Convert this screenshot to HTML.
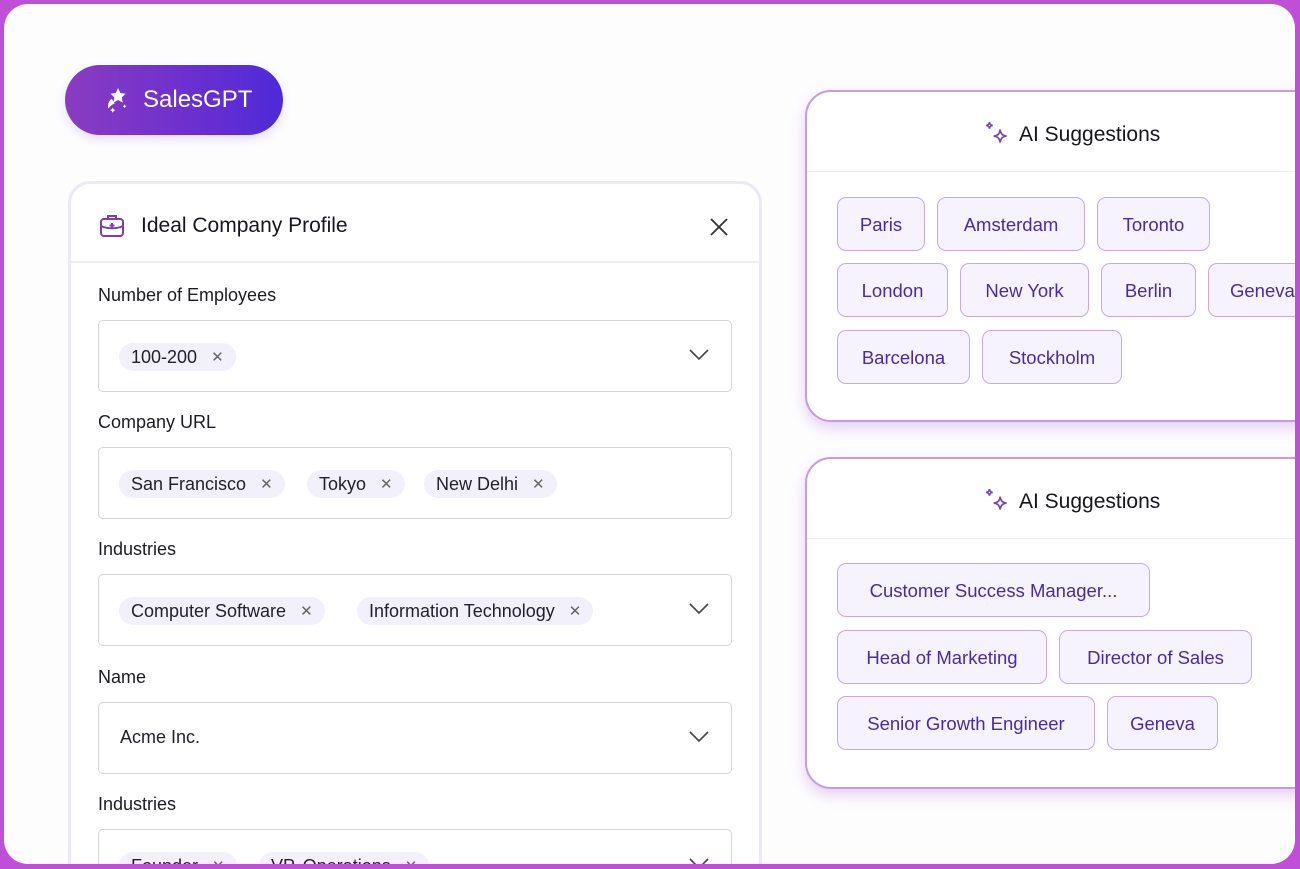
<!DOCTYPE html>
<html><head><meta charset="utf-8"><style>
*{box-sizing:border-box;margin:0;padding:0}
body{width:1300px;height:869px;background:#c04fd8;font-family:"Liberation Sans",sans-serif;overflow:hidden;position:relative}
.frame{position:absolute;left:4px;top:4px;width:1291px;height:860px;background:#fdfdfe;border-radius:24px;overflow:hidden}
.abs{position:absolute}
.brand{left:61px;top:61px;width:218px;height:70px;border-radius:35px;background:linear-gradient(90deg,#8a3cc0,#6a2fd0 60%,#4e2ad8);color:#fff;font-size:24px;display:flex;align-items:center;padding-left:38px;box-shadow:0 4px 10px rgba(90,40,200,.15)}
.card{left:64px;top:177px;width:694px;height:720px;background:#fff;border:3px solid #ebe8fb;border-radius:22px}
.hdr{position:absolute;left:0;top:0;right:0;height:79px;border-bottom:2px solid #ececf0;display:flex;align-items:center;padding-left:70px;padding-top:6px;font-size:21px;color:#16161d}
.lbl{font-size:18px;color:#1b1b22;left:94px}
.inp{left:94px;width:634px;height:72px;border:1.5px solid #d5d5da;border-radius:5px;background:#fff}
.pill{position:absolute;top:22px;height:28px;border-radius:14px;background:#f1f0fb;font-size:18px;color:#22222a;display:flex;align-items:center;padding:0 12px;white-space:nowrap}
.pill span{margin-left:14px;color:#666;font-size:15px}
.chev{position:absolute;right:22px;top:28px}
.sc{left:801px;width:520px;height:332px;background:#fff;border:2px solid #c89be0;border-radius:26px;box-shadow:0 6px 14px rgba(190,120,230,.35)}
.sh{position:absolute;left:0;right:0;top:0;height:80px;border-bottom:1.5px solid #efeff3;display:flex;align-items:center;padding-left:176px;padding-top:7px;font-size:21px;color:#16161d}
.chip{position:absolute;height:54px;border:1.5px solid #c6a9e4;background:#f6f2fe;border-radius:9px;color:#4a2aa6;font-size:18.5px;display:flex;align-items:center;justify-content:center;white-space:nowrap;overflow:hidden;padding-top:2px}
</style></head><body>
<div class="frame">
<div class="abs brand"><svg width="28" height="28" viewBox="0 0 26 26" style="margin-right:12px"><path d="M14 2l2.2 4.5 4.8.7-3.5 3.4.8 4.8L14 13l-4.3 2.4.8-4.8L7 7.2l4.8-.7z" fill="#fff"/><path d="M8 12c-3 2-4 6-3 9 2-3 4-4 6-5" fill="#fff"/><path d="M9 20l.8 1.6 1.6.8-1.6.8L9 25l-.8-1.8-1.6-.8 1.6-.8zM20 17l.6 1.2 1.2.6-1.2.6-.6 1.2-.6-1.2-1.2-.6 1.2-.6z" fill="#fff"/></svg>SalesGPT</div>

<div class="abs card">
<div class="hdr"><svg width="26" height="26" viewBox="0 0 26 26" style="position:absolute;left:28px;top:29px" fill="none" stroke="#7b3fb0" stroke-width="2"><rect x="2" y="6" width="22" height="17" rx="3"/><path d="M9 6V3h8v3M2 13c6 3 16 3 22 0M13 10v5M10.5 12.5h5"/></svg>Ideal Company Profile
<svg width="20" height="20" viewBox="0 0 20 20" style="position:absolute;right:30px;top:33px" stroke="#333" stroke-width="1.8"><path d="M2 2l16 16M18 2L2 18"/></svg></div>
</div>

<div class="abs lbl" style="top:281px">Number of Employees</div>
<div class="abs inp" style="top:316px"><div class="pill" style="left:20px">100-200<span>✕</span></div><svg class="chev" width="20" height="12" viewBox="0 0 20 12" fill="none" stroke="#444" stroke-width="1.6"><path d="M1 1l9 9 9-9"/></svg></div>

<div class="abs lbl" style="top:408px">Company URL</div>
<div class="abs inp" style="top:443px"><div class="pill" style="left:20px">San Francisco<span>✕</span></div><div class="pill" style="left:208px">Tokyo<span>✕</span></div><div class="pill" style="left:325px">New Delhi<span>✕</span></div></div>

<div class="abs lbl" style="top:535px">Industries</div>
<div class="abs inp" style="top:570px"><div class="pill" style="left:20px">Computer Software<span>✕</span></div><div class="pill" style="left:258px">Information Technology<span>✕</span></div><svg class="chev" width="20" height="12" viewBox="0 0 20 12" fill="none" stroke="#444" stroke-width="1.6"><path d="M1 1l9 9 9-9"/></svg></div>

<div class="abs lbl" style="top:663px">Name</div>
<div class="abs inp" style="top:698px"><div style="position:absolute;left:21px;top:24px;font-size:18px;color:#22222a">Acme Inc.</div><svg class="chev" width="20" height="12" viewBox="0 0 20 12" fill="none" stroke="#444" stroke-width="1.6"><path d="M1 1l9 9 9-9"/></svg></div>

<div class="abs lbl" style="top:790px">Industries</div>
<div class="abs inp" style="top:825px"><div class="pill" style="left:20px">Founder<span>✕</span></div><div class="pill" style="left:160px">VP, Operations<span>✕</span></div><svg class="chev" width="20" height="12" viewBox="0 0 20 12" fill="none" stroke="#444" stroke-width="1.6"><path d="M1 1l9 9 9-9"/></svg></div>

<div class="abs sc" style="top:86px">
<div class="sh"><svg width="30" height="30" viewBox="0 0 28 28" style="margin-right:6px" fill="none" stroke="#7a45b8" stroke-width="1.6"><path d="M16 9c.6 4 2 5.5 6 6-4 .6-5.4 2-6 6-.6-4-2-5.4-6-6 4-.5 5.4-2 6-6zM6 2c.3 2 1 2.7 3 3-2 .3-2.7 1-3 3-.3-2-1-2.7-3-3 2-.3 2.7-1 3-3z"/></svg>AI Suggestions</div>
<div class="chip" style="left:30px;top:105px;width:88px">Paris</div>
<div class="chip" style="left:130px;top:105px;width:148px">Amsterdam</div>
<div class="chip" style="left:290px;top:105px;width:113px">Toronto</div>
<div class="chip" style="left:30px;top:171px;width:111px">London</div>
<div class="chip" style="left:153px;top:171px;width:129px">New York</div>
<div class="chip" style="left:294px;top:171px;width:95px">Berlin</div>
<div class="chip" style="left:401px;top:171px;width:120px;justify-content:flex-start;padding-left:21px">Geneva</div>
<div class="chip" style="left:30px;top:238px;width:133px">Barcelona</div>
<div class="chip" style="left:175px;top:238px;width:140px">Stockholm</div>
</div>

<div class="abs sc" style="top:453px">
<div class="sh"><svg width="30" height="30" viewBox="0 0 28 28" style="margin-right:6px" fill="none" stroke="#7a45b8" stroke-width="1.6"><path d="M16 9c.6 4 2 5.5 6 6-4 .6-5.4 2-6 6-.6-4-2-5.4-6-6 4-.5 5.4-2 6-6zM6 2c.3 2 1 2.7 3 3-2 .3-2.7 1-3 3-.3-2-1-2.7-3-3 2-.3 2.7-1 3-3z"/></svg>AI Suggestions</div>
<div class="chip" style="left:30px;top:104px;width:313px">Customer Success Manager...</div>
<div class="chip" style="left:30px;top:171px;width:210px">Head of Marketing</div>
<div class="chip" style="left:252px;top:171px;width:193px">Director of Sales</div>
<div class="chip" style="left:30px;top:237px;width:258px">Senior Growth Engineer</div>
<div class="chip" style="left:300px;top:237px;width:111px">Geneva</div>
</div>
</div>
</body></html>
